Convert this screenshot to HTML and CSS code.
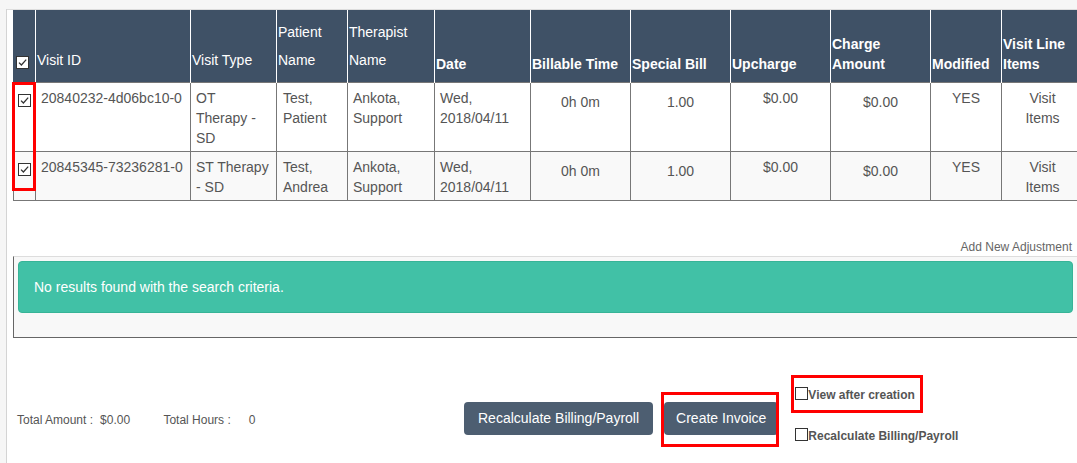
FILE: index.html
```html
<!DOCTYPE html>
<html>
<head>
<meta charset="utf-8">
<title>Invoice</title>
<link rel="stylesheet" href="styles.css">
</head>
<body>
<div class="page">
  <div class="sheet">
    <table class="visits">
      <colgroup>
        <col style="width:22px"><col style="width:155px"><col style="width:86px"><col style="width:71px"><col style="width:87px"><col style="width:96px"><col style="width:100px"><col style="width:100px"><col style="width:100px"><col style="width:100px"><col style="width:71px"><col style="width:82px">
      </colgroup>
      <thead>
        <tr class="head-row">
          <th class="chk"><span class="cb checked"><svg viewBox="0 0 13 13" width="13" height="13"><path d="M3 6.6 L5.4 9 L10.2 3.6" fill="none" stroke="#333" stroke-width="1.3"/></svg></span></th>
          <th class="norm">Visit ID</th>
          <th class="norm">Visit Type</th>
          <th class="norm">Patient Name</th>
          <th class="norm">Therapist Name</th>
          <th class="bold">Date</th>
          <th class="bold">Billable Time</th>
          <th class="bold">Special Bill</th>
          <th class="bold">Upcharge</th>
          <th class="bold">Charge Amount</th>
          <th class="bold">Modified</th>
          <th class="bold">Visit Line Items</th>
        </tr>
      </thead>
      <tbody>
        <tr>
          <td class="chk"><span class="cb checked"><svg viewBox="0 0 13 13" width="13" height="13"><path d="M3 6.6 L5.4 9 L10.2 3.6" fill="none" stroke="#333" stroke-width="1.3"/></svg></span></td>
          <td class="nowrap">20840232-4d06bc10-0</td>
          <td class="vtype">OT Therapy - SD</td>
          <td class="pat">Test, Patient</td>
          <td>Ankota, Support</td>
          <td>Wed, 2018/04/11</td>
          <td class="center low">0h 0m</td>
          <td class="center low">1.00</td>
          <td class="center">$0.00</td>
          <td class="center low">$0.00</td>
          <td class="center">YES</td>
          <td class="center items">Visit Items</td>
        </tr>
        <tr class="alt">
          <td class="chk"><span class="cb checked"><svg viewBox="0 0 13 13" width="13" height="13"><path d="M3 6.6 L5.4 9 L10.2 3.6" fill="none" stroke="#333" stroke-width="1.3"/></svg></span></td>
          <td class="nowrap">20845345-73236281-0</td>
          <td class="vtype">ST Therapy - SD</td>
          <td class="pat">Test, Andrea</td>
          <td>Ankota, Support</td>
          <td>Wed, 2018/04/11</td>
          <td class="center low">0h 0m</td>
          <td class="center low">1.00</td>
          <td class="center">$0.00</td>
          <td class="center low">$0.00</td>
          <td class="center">YES</td>
          <td class="center items">Visit Items</td>
        </tr>
      </tbody>
    </table>

    <div class="adj-row"><span class="adj-link">Add New Adjustment</span></div>

    <div class="adj-panel">
      <div class="alert">No results found with the search criteria.</div>
    </div>

    <div class="footer">
      <div class="totals">
        <span class="t-label">Total Amount :</span><span class="t-val">$0.00</span>
        <span class="t-label t-second">Total Hours :</span><span class="t-val t-hours">0</span>
      </div>
      <div class="actions">
        <button class="btn btn-recalc">Recalculate Billing/Payroll</button>
        <button class="btn btn-create">Create Invoice</button>
      </div>
      <div class="options">
        <label class="opt"><span class="cb small"></span>View after creation</label>
        <label class="opt opt-second"><span class="cb small"></span>Recalculate Billing/Payroll</label>
      </div>
    </div>
  </div>
</div>

<div class="mark mark-checks"></div>
<div class="mark mark-create"></div>
<div class="mark mark-view"></div>
</body>
</html>
```
FILE: styles.css
```css
html, body {
  margin: 0;
  padding: 0;
  overflow: hidden;
}
body {
  position: relative;
  width: 1077px;
  height: 463px;
  background: #f6f6f6;
  font-family: "Liberation Sans", Arial, sans-serif;
  color: #555;
}
.page {
  margin-left: 6px;
  height: 463px;
  border-left: 1px solid #d4d4d4;
  background: #fff;
}
.sheet {
  margin-top: 9px;
  border-top: 1px solid #dddddd;
  padding-left: 6px;
  width: 1100px;
}

/* table */
.visits {
  width: 1070px;
  table-layout: fixed;
  border-collapse: collapse;
  font-size: 14px;
}
.visits tr.head-row {
  height: 72px;
}
.visits th {
  background: #3f5166;
  color: #fff;
  text-align: left;
  vertical-align: bottom;
  padding: 0 1px 8px 1px;
  border-left: 1px solid #fff;
  border-right: 1px solid #fff;
  border-top: none;
  border-bottom: none;
}
.visits th:first-child {
  border-left: 1px solid #3f5166;
}
.visits th.norm {
  font-weight: normal;
  line-height: 28px;
}
.visits th.bold {
  font-weight: bold;
  line-height: 20px;
}
.visits th.chk {
  padding: 0 0 13px 2px;
}
.visits td {
  border: 1px solid #777;
  padding: 5px 5px 3px 5px;
  line-height: 20px;
  vertical-align: top;
  color: #555;
  background: #fff;
}
.visits tr.alt td {
  background: #f9f9f9;
}
.visits td.chk {
  padding: 11px 0 0 4px;
}
.visits td.nowrap {
  white-space: nowrap;
  padding-right: 0;
}
.visits td.vtype {
  padding-right: 6px;
}
.visits td.pat {
  padding-left: 6px;
}
.visits td.center {
  text-align: center;
}
.visits td.low {
  padding-top: 9px;
}
.visits td.items {
  padding-left: 9px;
  padding-right: 9px;
}

/* checkboxes */
.cb {
  display: block;
  width: 13px;
  height: 13px;
  box-sizing: border-box;
  border: 1px solid #333;
  background: #fff;
  position: relative;
}
.cb svg {
  position: absolute;
  left: -1px;
  top: -1px;
}
.cb.small {
  display: inline-block;
  flex: none;
  width: 13px;
  height: 13px;
}

/* adjustment */
.adj-row {
  width: 1059px;
  text-align: right;
  margin-top: 38px;
  font-size: 12px;
  line-height: 16px;
  height: 16px;
}
.adj-link {
  color: #666;
}
.adj-panel {
  margin-top: 1px;
  width: 1070px;
  background: #f8f8f8;
  border-top: 1px solid #dddddd;
  border-left: 1px solid #666;
  border-bottom: 1px solid #666;
  padding: 4px 10px 24px 4px;
  box-sizing: border-box;
}
.alert {
  background: #41c1a6;
  border: 1px solid #37b497;
  border-radius: 4px;
  color: #fff;
  font-size: 14px;
  line-height: 20px;
  padding: 15px;
}

/* footer */
.footer {
  display: flex;
  align-items: flex-start;
  padding-left: 4px;
}
.totals {
  width: 447px;
  margin-top: 74px;
  font-size: 12px;
  line-height: 16px;
  color: #555;
}
.t-val {
  margin-left: 7px;
}
.t-second {
  margin-left: 30px;
}
.t-hours {
  margin-left: 18px;
}
.actions {
  display: flex;
  gap: 11px;
  margin-top: 64px;
}
.btn {
  height: 33px;
  border: none;
  border-radius: 4px;
  background: #4d5e71;
  color: #fff;
  font-family: "Liberation Sans", Arial, sans-serif;
  font-size: 14px;
  padding: 0 14px;
}
.btn-create {
  padding: 0 12px;
}
.options {
  margin-left: 17px;
  margin-top: 49px;
  display: flex;
  flex-direction: column;
}
.opt {
  display: flex;
  align-items: flex-start;
  font-size: 12px;
  font-weight: bold;
  line-height: 16px;
  color: #555;
}
.opt-second {
  margin-top: 25px;
}

/* annotation boxes */
.mark {
  position: absolute;
  border: 3px solid #ff0000;
  box-sizing: border-box;
}
.mark-checks {
  left: 12px;
  top: 82px;
  width: 24px;
  height: 109px;
}
.mark-create {
  left: 661px;
  top: 392px;
  width: 118px;
  height: 55px;
}
.mark-view {
  left: 791px;
  top: 375px;
  width: 132px;
  height: 38px;
}
```
